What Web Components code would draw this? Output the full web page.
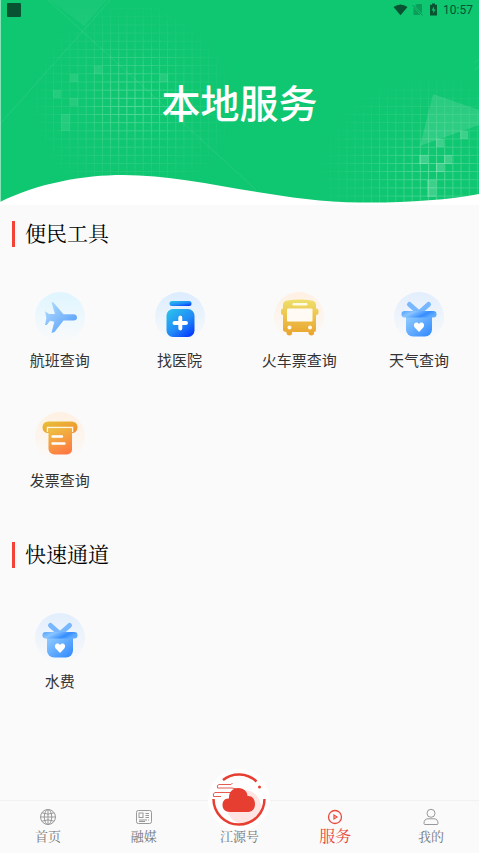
<!DOCTYPE html>
<html lang="zh-CN">
<head>
<meta charset="utf-8">
<meta name="viewport" content="width=device-width, initial-scale=1">
<title>本地服务</title>
<style>
html,body{margin:0;background:#fafafa}
body{font-family:"Noto Sans CJK SC",sans-serif;color:#333;
--serif:"Noto Serif CJK SC","Noto Serif SC","Source Han Serif SC","Songti SC","Noto Sans CJK SC",serif}
</style>
</head>
<body>
<service-app></service-app>
<script>
const define=(name,html,setup)=>{
  const t=document.createElement('template');t.innerHTML=html;
  customElements.define(name,class extends HTMLElement{
    constructor(){super();this.attachShadow({mode:'open'}).append(t.content.cloneNode(true))}
    connectedCallback(){if(setup)setup(this,this.shadowRoot)}
  });
};

const gift=`<defs><linearGradient id="d" x1="0" y1="0" x2="0" y2="1"><stop stop-color="#e2eefd"/><stop offset="1" stop-color="#fafafa"/></linearGradient>
<linearGradient id="a" x1="0" y1="0" x2="1" y2="1"><stop stop-color="#97d0ff"/><stop offset="1" stop-color="#2e87ff"/></linearGradient>
<linearGradient id="b" x1="0" y1="0" x2="1" y2=".35"><stop stop-color="#53a0ff"/><stop offset=".35" stop-color="#8ac5ff"/><stop offset=".75" stop-color="#368dff"/><stop offset="1" stop-color="#5eabff"/></linearGradient></defs>
<circle cx="25" cy="25" r="25" fill="url(#d)"/>
<path d="M15.500 12.500 24 20M34.500 12.500 26 20" stroke="#77b7ff" stroke-width="5" stroke-linecap="round"/>
<path d="M12 23H38V37.500a7 7 0 0 1-7 7H19a7 7 0 0 1-7-7Z" fill="url(#a)"/>
<rect x="7.500" y="19" width="35" height="6.500" rx="3.250" fill="url(#b)"/>
<path d="M25 40 20.700 35.500C18 32 22.500 28.500 25 32.200C27.500 28.500 32 32 29.300 35.500Z" fill="#fff"/>`;
const pictures={
plane:`<defs><linearGradient id="d" x1="0" y1="0" x2="0" y2="1"><stop stop-color="#dff5ff"/><stop offset="1" stop-color="#fafafa"/></linearGradient><linearGradient id="a" x1="0" y1="0" x2="1" y2="1"><stop stop-color="#b5deff"/><stop offset="1" stop-color="#4a96f8"/></linearGradient></defs>
<circle cx="25" cy="25" r="25" fill="url(#d)"/><path d="M16.500 10.300 18.500 10.500 28.500 22.200H38.500Q42 22.600 42 25.500T38.500 28.500H28.500L19.500 40 16.500 41 19.300 29.700 15 28.800 11.800 33H10L11.400 26 10 19.300 14 22H20Z" fill="url(#a)"/>`,
hospital:`<defs><linearGradient id="d" x1="0" y1="0" x2="0" y2="1"><stop stop-color="#dcedff"/><stop offset="1" stop-color="#fafafa"/></linearGradient><linearGradient id="a" x1=".2" y1="0" x2="1" y2="1"><stop stop-color="#29bdec"/><stop offset=".5" stop-color="#218bf7"/><stop offset="1" stop-color="#012bff"/></linearGradient></defs>
<circle cx="25" cy="25" r="25" fill="url(#d)"/><rect x="14.500" y="9" width="22" height="5" rx="2.500" fill="url(#a)"/><rect x="11.500" y="17" width="28" height="28" rx="6.500" fill="url(#a)"/><path d="M25.500 25V37M20 31H31" stroke="#0b52cf" stroke-opacity=".35" stroke-width="4.500" stroke-linecap="round"/><path d="M25.300 25.500V36.500M19.500 31H31" stroke="#fff" stroke-width="4" stroke-linecap="round"/>`,
bus:`<defs><linearGradient id="d" x1="0" y1="0" x2="0" y2="1"><stop stop-color="#fff0e2"/><stop offset="1" stop-color="#fafafa"/></linearGradient><linearGradient id="a" x1="0" y1="0" x2="0" y2="1"><stop stop-color="#eee06b"/><stop offset="1" stop-color="#eaa32c"/></linearGradient></defs>
<circle cx="25" cy="25" r="25" fill="url(#d)"/><path d="M9 12.500Q9.500 9 13.500 8.500Q25.500 6.500 37.500 8.500Q41.500 9 42 12.500V16.500Q44.500 16.500 44.500 18.500V21Q44.500 23 42 23V38Q42 40 40 40V41.500Q40 43.500 37.500 43.500T34.500 41.500V40H18V41.500Q18 43.500 15.500 43.500T12.500 41.500V40Q9 39.500 9 38V23Q7 23 7 21V18.500Q7 16.500 9 16.500Z" fill="url(#a)"/><rect x="18.500" y="11" width="15" height="2.500" rx="1.250" fill="#fffbe6"/><rect x="13" y="16.500" width="25.500" height="13" rx="1" fill="#fffaf4"/><circle cx="15.500" cy="35.500" r="2" fill="#fffaf0"/><circle cx="36" cy="35.500" r="2" fill="#fffaf0"/>`,
gift,
invoice:`<defs><linearGradient id="d" x1="0" y1="0" x2="0" y2="1"><stop stop-color="#fff0e2"/><stop offset="1" stop-color="#fafafa"/></linearGradient><linearGradient id="a" x1="0" y1="0" x2="1" y2="1"><stop stop-color="#e5c43a"/><stop offset="1" stop-color="#f5892f"/></linearGradient><linearGradient id="b" x1=".3" y1="0" x2=".7" y2="1"><stop stop-color="#edbd3f"/><stop offset="1" stop-color="#ff7842"/></linearGradient></defs>
<circle cx="25" cy="25" r="25" fill="url(#d)"/><rect x="7.500" y="9.500" width="35" height="11.500" rx="5.500" fill="url(#a)"/><path d="M12.500 20V15.500H37.500V20" fill="none" stroke="#fff7df" stroke-width="1.500"/><path d="M13.500 16.500H37V37.500a5 5 0 0 1-5 5H19.500a6 6 0 0 1-6-6Z" fill="url(#b)"/><path d="M17.500 24.500H27M17.500 31.500H29.500" stroke="#fff" stroke-width="2.400" stroke-linecap="round"/>`
};
const tabIcons={
home:`<circle cx="9" cy="9" r="7.500"/><ellipse cx="9" cy="9" rx="3.700" ry="7.500"/><path d="M1.500 9H16.500M9 1.500V16.500M3 4.800Q9 7.500 15 4.800M3 13.200Q9 10.500 15 13.200"/>`,
media:`<rect x="1.500" y="2.500" width="15" height="13" rx="1.800"/><rect x="4" y="5" width="4" height="4.500"/><path d="M10.500 5.500H14M10.500 7.500H14M10.500 9.500H14M4 12H12M13 12H14M4 13.500H10"/>`,
service:`<circle cx="9" cy="9" r="6.500" stroke-width="1.300"/><path d="M8 7V11L11 9Z" stroke-width="1.200"/>`,
mine:`<circle cx="9" cy="5.300" r="4"/><path d="M2 15.500Q2 10.800 6 10.800H12Q16 10.800 16 15.500Q16 16.500 15 16.500H3Q2 16.500 2 15.500Z"/>`
};

define('status-bar',`<style>
:host{display:flex;justify-content:space-between;align-items:center;height:19px;padding:0 6px 0 7px;color:#075332;font:400 12px/20px Roboto,sans-serif}
i{width:14px;height:14px;border-radius:1px;background:#075332}div{display:flex;align-items:center;gap:5px}svg{display:block}</style>
<i></i><div><svg width="45" height="14" viewBox="0 0 45 14"><path d="M.5 4Q7.500-1 14.500 4L7.500 12.300Z" fill="currentColor"/><path d="M22.500 2 24 1H29V10.500L22.500 3.500ZM20.500 4.500V12H27.500Z" fill="currentColor" opacity=".35"/><path d="M19.500 2 29.500 12.500" stroke="currentColor" opacity=".45"/><path d="M37 1.800H39V.500H42V1.800H44V12.500H37Z" fill="currentColor"/><path d="M41 3.500 38.500 7.500H40.500L40 10.500 42.700 6.500H40.800Z" fill="#0fc871"/></svg><span>10:57</span></div>`);

define('page-banner',`<style>
:host{display:grid;min-height:205px}svg,.content{grid-area:1/1}svg{width:100%;height:100%;display:block}
.content{display:grid;grid-template-rows:auto 1fr;z-index:1}h1{margin:0;padding-top:54px;text-align:center;color:#fff;font-size:39px;line-height:56px;font-weight:500}</style>
<svg viewBox="0 0 479 205" preserveAspectRatio="none" aria-hidden="true"><defs>
<pattern id="p" width="8.150" height="8.150" patternUnits="userSpaceOnUse" x="-4" y="0"><path d="M0 .500H8.150M.500 0V8.150" stroke="#a7f0cb" stroke-width="1"/></pattern>
<radialGradient id="g"><stop stop-color="#fff" stop-opacity=".5"/><stop offset=".5" stop-color="#fff" stop-opacity=".18"/><stop offset="1" stop-color="#fff" stop-opacity="0"/></radialGradient>
<mask id="m"><ellipse cx="132" cy="103" rx="106" ry="105" fill="url(#g)"/><ellipse cx="432" cy="173" rx="118" ry="105" fill="url(#g)"/></mask>
<linearGradient id="t" x2="0" y2="1"><stop stop-color="#fff" stop-opacity=".04"/><stop offset="1" stop-color="#fff" stop-opacity=".11"/></linearGradient></defs>
<path d="M0 0H479V205H0Z" fill="#0fc671"/><path d="M0 0H479V205H0Z" fill="url(#p)" mask="url(#m)"/>
<path d="M50 0H107L84 26ZM433 94 479 110V125L420 146Z" fill="url(#t)"/><path d="M433 94 479 110V125L420 146Z" fill="#fff" opacity=".03"/>
<path d="M48 0 240 175 256 190M110 0 83 31 0 124M479 59 475 63M479 66 475 70" fill="none" stroke="#fff" stroke-opacity=".09"/>
<path d="M94 66h8v8h-8ZM70 74h8v8h-8ZM53 90h8v8h-8ZM70 98h8v8h-8ZM61 114h9v17h-9ZM160 74h8v8h-8Z" fill="#fff" opacity=".09"/>
<path d="M460 131h8v8h-8ZM436 139h8v8h-8ZM419 155h9v9h-9ZM444 155h8v9h-8ZM436 163h8v9h-8ZM427 180h9v17h-9Z" fill="#fff" opacity=".19"/>
<path d="M0 202C38 183 84 175 123 175C195 175 275 202 360 202.500C405 203 448 200 479 194V205H0Z" fill="#fff"/><path d="M.5 0V202" stroke="#fff" stroke-opacity=".5"/></svg>
<div class="content"><slot name="status"></slot><h1><slot></slot></h1></div>`);

define('service-section',`<style>
:host{display:block;padding:16px 0 12px}h2{display:flex;gap:10px;margin:0 12px 27px;height:26px;font:400 21px/22px var(--serif);color:#000}
h2::before{content:"";width:3px;height:26px;background:#f44336}.grid{display:grid;grid-template-columns:repeat(4,minmax(0,1fr))}</style>
<section><h2></h2><div class="grid"><slot></slot></div></section>`,(e,r)=>r.querySelector('h2').textContent=e.getAttribute('heading'));

define('service-item',`<style>
:host{display:block}a{display:flex;flex-direction:column;align-items:center;gap:7px;padding:18px 0 23px;color:#333;text-decoration:none;font-size:15px;line-height:22px;white-space:nowrap}
svg{display:block;fill:none}</style><a href="#"><svg width="50" height="50" viewBox="0 0 50 50" aria-hidden="true"></svg><span><slot></slot></span></a>`,
(e,r)=>r.querySelector('svg').innerHTML=pictures[e.getAttribute('icon')]);

define('tab-item',`<style>
:host{display:block}a{display:flex;flex-direction:column;align-items:center;padding-top:7px;color:#777;text-decoration:none;font:400 13px/20px var(--serif);white-space:nowrap}
svg{display:block;fill:none;stroke:#999;stroke-width:1;flex:none}
:host([active]) a{color:#e84a3c;font-size:16px}:host([active]) svg{stroke:#e84a3c}</style>
<a href="#"><svg width="18" height="18" viewBox="0 0 18 18" aria-hidden="true"></svg><span><slot></slot></span></a>`,
(e,r)=>{r.querySelector('svg').innerHTML=tabIcons[e.getAttribute('icon')];if(e.hasAttribute('active'))r.querySelector('a').setAttribute('aria-current','page')});

define('center-tab',`<style>
:host{display:block}a{display:flex;flex-direction:column;align-items:center;margin-top:-32px;color:#777;text-decoration:none;font:400 13px/20px var(--serif);white-space:nowrap}
svg{display:block;margin-bottom:-5px}span{z-index:1}</style>
<a href="#"><svg width="62" height="62" viewBox="0 0 62 62" fill="none" aria-hidden="true"><circle cx="31" cy="31" r="31" fill="#fff"/><circle cx="36" cy="38" r="17" fill="#fee5e4"/>
<path d="M15 11A25.500 25.500 0 0 1 48.500 12.500M5.500 30A25.500 25.500 0 1 0 56.500 30" stroke="#e63f32" stroke-width="2.500"/><circle cx="51.500" cy="18" r="1.500" fill="#e63f32"/>
<path d="M24.500 14 23 15.500H11Q8.500 16 9.500 19H24L29 20M23 23.500H7Q4.500 24 5.500 27.500H13" stroke="#e65a50" stroke-width="1"/>
<path d="M21 29.500C20.500 23 25 19 30.500 19S39.500 23 39.500 27C44 26.500 47 30 47 35C47 40.500 44 43 39 43H22C17 43 14.500 40 14.500 36C14.500 32 17 29 21 29.500Z" fill="#e63f32"/></svg><span><slot></slot></span></a>`);

define('tab-bar',`<style>:host{display:block;position:sticky;bottom:0;background:#fafafa;border-top:1px solid #f1f1f1}
nav{display:grid;grid-template-columns:repeat(5,minmax(0,1fr));height:52px}</style><nav aria-label="主导航"><slot></slot></nav>`);

define('service-app',`<style>:host{display:flex;flex-direction:column;min-height:100vh}main{flex:1}</style>
<page-banner><status-bar slot="status"></status-bar>本地服务</page-banner>
<main><service-section heading="便民工具"><service-item icon="plane">航班查询</service-item><service-item icon="hospital">找医院</service-item><service-item icon="bus">火车票查询</service-item><service-item icon="gift">天气查询</service-item><service-item icon="invoice">发票查询</service-item></service-section>
<service-section heading="快速通道"><service-item icon="gift">水费</service-item></service-section></main>
<tab-bar><tab-item icon="home">首页</tab-item><tab-item icon="media">融媒</tab-item><center-tab>江源号</center-tab><tab-item icon="service" active>服务</tab-item><tab-item icon="mine">我的</tab-item></tab-bar>`);
</script>
</body>
</html>
